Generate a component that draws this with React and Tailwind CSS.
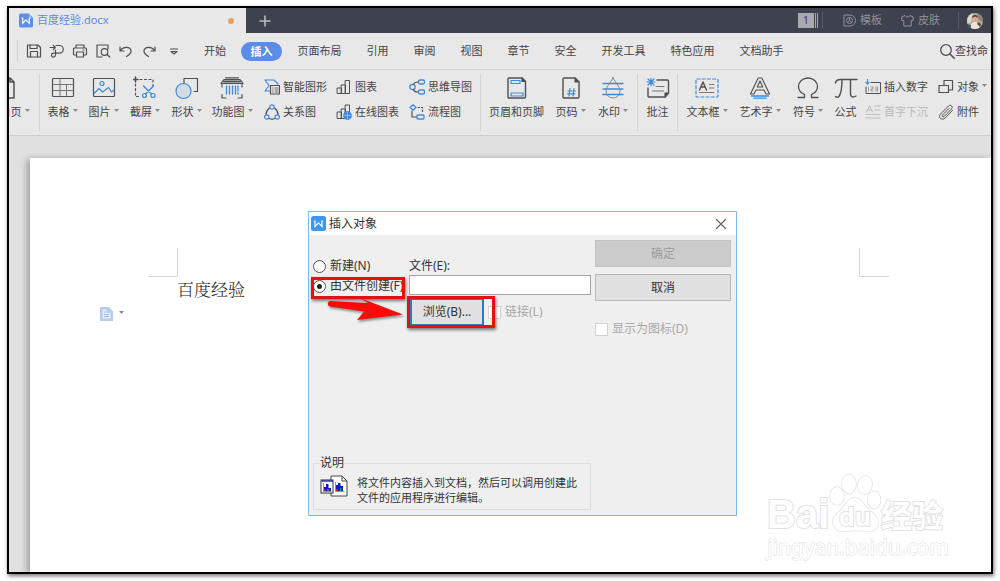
import React from "react";

const DARK = "#505050";
const BLUE = "#3f8ad8";

function Icon({ size = "h-[24px] w-[24px]", box = "0 0 24 24", children }) {
  return (
    <svg
      className={`${size} shrink-0`}
      viewBox={box}
      fill="none"
      stroke={DARK}
      strokeWidth="1.2"
      strokeLinecap="round"
      strokeLinejoin="round"
      aria-hidden="true"
    >
      {children}
    </svg>
  );
}

function Caret() {
  return (
    <svg className="mb-1 h-[3px] w-[5px] shrink-0" viewBox="0 0 5 3" aria-hidden="true">
      <path d="M0 0h5L2.500 3z" fill="#8a8a8a" />
    </svg>
  );
}

function WpsMark({ className, fill, folded }) {
  return (
    <svg className={`${className} shrink-0`} viewBox="0 0 15 15" aria-hidden="true">
      {folded ? (
        <>
          <path d="M2 0h8.500L15 4.500V13a2 2 0 0 1-2 2H2a2 2 0 0 1-2-2V2a2 2 0 0 1 2-2z" fill={fill} />
          <path d="M10.500 0 15 4.500h-4.500z" fill="#8db1f5" />
        </>
      ) : (
        <rect width="15" height="15" rx="2.5" fill={fill} />
      )}
      <path d="M2.800 5h1.200v5.500l3.500-3.700 3.500 3.700V5h1.200" fill="none" stroke="#fff" strokeWidth="1.2" />
    </svg>
  );
}

const quickIcons = [
  {
    name: "保存",
    art: (
      <>
        <path d="M1.500 2h10.500L14.500 4.500V14h-13z" />
        <path d="M4.500 14V8.500h7V14M4 2v3.500h7V2" />
      </>
    ),
  },
  {
    name: "输出",
    art: (
      <path d="M1 4.500h5M4.300 2.500l2 2-2 2M7 2.500h3.500a3.800 3.800 0 0 1 0 7.600H4a2 2 0 1 0 2.500 2V7" />
    ),
  },
  {
    name: "打印",
    art: (
      <>
        <path d="M4 5V2h8v3M4 12H2.500a1 1 0 0 1-1-1V6a1 1 0 0 1 1-1h11a1 1 0 0 1 1 1v5a1 1 0 0 1-1 1H12" />
        <path d="M4.500 9h7v5h-7zM11 7h1" />
      </>
    ),
  },
  {
    name: "打印预览",
    art: (
      <>
        <path d="M7 14H2V2h11v4" />
        <circle cx="9.500" cy="9" r="3.300" />
        <path d="m12 11.500 2.800 2.500" />
      </>
    ),
  },
  { name: "撤销", art: <path d="M2 4v4h4M2.300 7.700C5 3.500 12 3 13 7.500c.5 3-2 4.500-4.500 6" /> },
  { name: "恢复", art: <path d="M14 4v4h-4M13.700 7.700C11 3.500 4 3 3 7.500c-.5 3 2 4.500 4.500 6" /> },
];

const menusAfter = [
  ["页面布局", "w-[69px]"],
  ["引用", "w-[47px]"],
  ["审阅", "w-[47px]"],
  ["视图", "w-[47px]"],
  ["章节", "w-[47px]"],
  ["安全", "w-[47px]"],
  ["开发工具", "w-[69px]"],
  ["特色应用", "w-[69px]"],
  ["文档助手", "w-[69px]"],
];

function TitleBar() {
  return (
    <header className="flex h-[25px] items-stretch bg-[#3e414e]">
      <div className="flex w-[237px] shrink-0 items-center bg-[#e8e8e8] pl-2.5 pr-3">
        <WpsMark className="h-[15px] w-[14px]" fill="#5b8fee" folded />
        <span className="ml-1 text-[11px] text-[#5b8be6]">百度经验.docx</span>
        <span className="ml-auto h-[6px] w-[6px] rounded-full bg-[#eaa05a]" />
      </div>
      <button aria-label="新建标签" className="flex w-[38px] items-center justify-center">
        <svg className="h-3 w-3" viewBox="0 0 12 12" stroke="#b9bac0" strokeWidth="1.6" aria-hidden="true">
          <path d="M6 .5v11M.5 6h11" />
        </svg>
      </button>
      <div className="ml-auto flex items-center pr-2 text-[11px] text-[#91939c]">
        <button className="flex h-[15px] items-center">
          <span className="flex h-[15px] w-4 items-center justify-center bg-[#a9aab0] text-[11px] text-[#3e414e]">1</span>
          <span className="ml-px h-[15px] w-px bg-[#a9aab0]" />
          <span className="ml-px h-[15px] w-px bg-[#a9aab0]" />
        </button>
        <span className="ml-1 h-[17px] w-px bg-[#565966]" />
        <button className="ml-5 flex items-center gap-1">
          <svg className="h-[13px] w-[13px]" viewBox="0 0 13 13" fill="none" stroke="#91939c" aria-hidden="true">
            <path d="M1 1h6a5.500 5.500 0 0 1 0 11H1z" />
            <circle cx="6.500" cy="6.500" r="3" />
            <path d="M6.500 3.500v3l2.300 2M6.500 6.500l-2.300 2" />
          </svg>
          模板
        </button>
        <button className="ml-[19px] flex items-center gap-1">
          <svg className="h-[13px] w-[13px]" viewBox="0 0 13 13" fill="none" stroke="#91939c" aria-hidden="true">
            <path d="M4 1.500 .8 3v3.500h2V12h7.400V6.500h2V3L9 1.500C8 3.500 5 3.500 4 1.500z" />
          </svg>
          皮肤
        </button>
        <span className="ml-[18px] h-[17px] w-px bg-[#565966]" />
        <button aria-label="用户" className="ml-2">
          <svg className="h-4 w-4" viewBox="0 0 16 16" aria-hidden="true">
            <defs>
              <clipPath id="face">
                <circle cx="8" cy="8" r="8" />
              </clipPath>
            </defs>
            <g clipPath="url(#face)">
              <rect width="16" height="16" fill="#a9b0a8" />
              <path d="M0 0h6l-2 9-4 2z" fill="#d9d6cf" />
              <path d="M10 0h6v9l-4-2z" fill="#8c7f70" />
              <path d="M3 16c0-5 2-7 5-7s5 2 5 7z" fill="#ece3da" />
              <circle cx="8" cy="6" r="3" fill="#d9ab8e" />
              <path d="M5 5c0-4 6-4 6 0-2-2-4-2-6 0z" fill="#4a332b" />
              <path d="M0 11l4 1v4H0z" fill="#4f5a4c" />
              <path d="m11 9 3 2-1 3-3-3z" fill="#6d4a3c" />
            </g>
          </svg>
        </button>
      </div>
    </header>
  );
}

function MenuBar() {
  return (
    <nav className="flex h-[37px] items-center overflow-hidden border-b border-[#d6d6d6] text-[11px]">
      <span className="ml-2 h-[22px] w-px shrink-0 bg-[#cfcfcf]" />
      <div className="ml-2 flex shrink-0 items-center gap-[7px]">
        {quickIcons.map((q) => (
          <button key={q.name} aria-label={q.name}>
            <Icon size="h-4 w-4" box="0 0 16 16">{q.art}</Icon>
          </button>
        ))}
        <button aria-label="更多" className="ml-0.5">
          <Icon size="h-4 w-4" box="0 0 16 16">
            <path d="M4.500 6h7M5 8.500l3 2.500 3-2.500z" />
          </Icon>
        </button>
      </div>
      <button className="ml-2.5 w-[46px] shrink-0">开始</button>
      <button className="mx-[3px] h-[19px] w-[41px] shrink-0 rounded-full bg-[#5b8de8] font-bold leading-none text-white">插入</button>
      {menusAfter.map(([name, width]) => (
        <button key={name} className={`${width} shrink-0 whitespace-nowrap`}>{name}</button>
      ))}
      <button className="ml-auto flex shrink-0 items-center whitespace-nowrap pr-[3px]">
        <Icon size="h-4 w-4" box="0 0 16 16">
          <circle cx="7" cy="7" r="5.300" strokeWidth="1.300" />
          <path d="m11 11 4.200 4.200" strokeWidth="1.600" />
        </Icon>
        查找命
      </button>
    </nav>
  );
}

function BigTool({ width, label, caret, children }) {
  return (
    <button className={`${width} flex shrink-0 flex-col items-center`}>
      <Icon>{children}</Icon>
      <span className="mt-1 flex items-end gap-[3px] whitespace-nowrap leading-4">
        {label}
        {caret && (
          <span className="mb-1">
            <Caret />
          </span>
        )}
      </span>
    </button>
  );
}

function SmallTool({ label, muted, caret, children }) {
  return (
    <button className={`flex items-center gap-[3px] whitespace-nowrap leading-4 ${muted ? "text-[#b9b9b9]" : ""}`}>
      <Icon size="h-4 w-4" box="0 0 16 16">{children}</Icon>
      {label}
      {caret && <Caret />}
    </button>
  );
}

function Divider() {
  return <span className="my-1 w-px shrink-0 bg-[#d4d4d4]" />;
}

function Ribbon() {
  return (
    <section aria-label="插入" className="flex h-[66px] shrink-0 overflow-hidden border-b border-[#cecece] text-[11px]">
      <div className="flex w-[30px] shrink-0 justify-end overflow-hidden pr-[3px] pt-[6px]">
        <BigTool width="w-[54px]" label="空白页" caret>
          <path d="M4 2h9l4 4v16H4zM13 2v4h4" strokeWidth="1.500" />
        </BigTool>
      </div>
      <Divider />
      <div className="flex shrink-0 pl-[2px] pt-[6px]">
        <BigTool width="w-[41px]" label="表格" caret>
          <rect x="1.500" y="2.500" width="21" height="18" rx="1" />
          <path d="M2 8.500h20M2 14.500h20M9 3v17M15.500 9v11" stroke="#777" strokeWidth="1" />
        </BigTool>
        <BigTool width="w-[41px]" label="图片" caret>
          <rect x="1.500" y="2.500" width="21" height="18" rx="1" />
          <g stroke={BLUE}>
            <circle cx="10" cy="7.500" r="2" />
            <path d="M2.500 17 7 12.500l3.500 3.500 6-4.500 3 4.500 2.500-2" />
          </g>
        </BigTool>
        <BigTool width="w-[42px]" label="截屏" caret>
          <path d="M0 3.500h5M2.500 1v5" strokeWidth="1.500" />
          <path d="M7 3.500h13v6M2.500 8v12.500h5" strokeDasharray="2 2.500" />
          <g stroke={BLUE}>
            <path d="m10.500 10 8 8M20.500 10l-8 8" strokeWidth="1.400" />
            <circle cx="11.500" cy="19.500" r="2" />
            <circle cx="20" cy="19.500" r="2" />
          </g>
        </BigTool>
        <BigTool width="w-[41px]" label="形状" caret>
          <path d="M9 7V2.500h13.500v13H19" />
          <circle cx="8.500" cy="15" r="7.500" stroke={BLUE} fill="#d2dce6" />
        </BigTool>
        <BigTool width="w-[50px]" label="功能图" caret>
          <path d="M4 3.500h16l3 4H1zM5.500 1.800h13M2 11V7.500h20V11M2 18.500V22h4M22 18.500V22h-4" />
          <path d="M4 5.500h16" strokeWidth="2" />
          <path d="M6.500 10v8M9.500 10v8M12.500 10v8M15.500 10v8M18 10v5M18 17v1" stroke={BLUE} strokeWidth="1.300" />
        </BigTool>
      </div>
      <div className="grid shrink-0 auto-rows-min grid-cols-[72px_73px_71px] gap-y-[9px] pl-[7px] pt-[9px]">
        <SmallTool label="智能图形">
          <path d="M1 1h9l4 4M1 1l4 5.500L1 12h5" stroke={BLUE} />
          <rect x="6.500" y="6.500" width="9" height="8.500" />
          <path d="M8.500 9h.5M11 9h3M8.500 11h.5M11 11h3M8.500 13h.5M11 13h3" strokeWidth=".8" />
        </SmallTool>
        <SmallTool label="图表">
          <path d="M1.500 9h4v5.500h-4zM5.500 6h4v8.500h-4zM9.500 1.500h4v13h-4z" strokeWidth="1" />
        </SmallTool>
        <SmallTool label="思维导图">
          <g stroke={BLUE} strokeWidth="1.300">
            <circle cx="3.500" cy="8" r="2.700" />
            <rect x="9.500" y="1" width="6" height="4" rx="1.500" />
            <rect x="9.500" y="11" width="6" height="4" rx="1.500" />
          </g>
          <path d="M4.500 5.500C5 3.500 6.500 3 9 3M4.500 10.500C5 12.500 6.500 13 9 13" />
        </SmallTool>
        <SmallTool label="关系图">
          <path d="M5.500 4C3 6 2 8 2 10.500M10.500 4C13 6 14 8 14 10.500M5 14.500c2 .8 4 .8 6 0" />
          <g stroke={BLUE}>
            <circle cx="8" cy="3" r="2.200" />
            <circle cx="2.800" cy="13" r="2.200" />
            <circle cx="13.200" cy="13" r="2.200" />
          </g>
        </SmallTool>
        <SmallTool label="在线图表">
          <path d="M1.500 8h4v6.500h-4zM5.500 5h4v9.500h-4zM9.500 1h4v8h-4z" strokeWidth="1" />
          <circle cx="11.500" cy="11.500" r="3.800" fill={BLUE} stroke={BLUE} />
          <path d="M8 11.500h7M11.500 8v7" stroke="#a9cbed" strokeWidth=".7" />
        </SmallTool>
        <SmallTool label="流程图">
          <g stroke={BLUE} strokeWidth="1.300">
            <path d="m4 .8 3 2.700-3 2.700-3-2.700z" />
            <rect x="8" y="11" width="7" height="4" rx="1" />
          </g>
          <path d="M3 7v6h4.500" />
          <path d="M9 3.500h4.500V9" strokeDasharray="1.500 2" />
        </SmallTool>
      </div>
      <Divider />
      <div className="flex shrink-0 px-[3px] pt-[6px]">
        <BigTool width="w-[65px]" label="页眉和页脚">
          <path d="M4 2h13l3.500 3.500V21a1 1 0 0 1-1 1H4a1 1 0 0 1-1-1V3a1 1 0 0 1 1-1z" strokeWidth="1.400" />
          <path d="M17 2v3.500h3.500z" fill={DARK} />
          <path d="M6 4.500h9v3H6zM6 17h12v3H6z" stroke={BLUE} />
        </BigTool>
        <BigTool width="w-[43px]" label="页码" caret>
          <path d="M5 2h11l4 4v15a1 1 0 0 1-1 1H5a1 1 0 0 1-1-1V3a1 1 0 0 1 1-1z" strokeWidth="1.400" />
          <path d="M16 2v4h4z" fill={DARK} />
          <path d="M11 12.500 10 20M15 12.500 14 20M9 15h7.500M8.500 17.800h7.500" stroke={BLUE} />
        </BigTool>
        <BigTool width="w-[42px]" label="水印" caret>
          <path d="M12 1.500c2 5 7 9 7 13.500a7 7 0 0 1-14 0c0-4.500 5-8.500 7-13.500z" stroke="#888" strokeWidth="1" />
          <path d="M2 7.500h20M2 13h20M2 18.500h20" stroke={BLUE} strokeWidth="1.300" />
        </BigTool>
      </div>
      <Divider />
      <div className="flex shrink-0 pt-[6px]">
        <BigTool width="w-[39px]" label="批注">
          <path d="M11 4h10.500a1 1 0 0 1 1 1v12L19 21H3a1 1 0 0 1-1-1v-8" strokeWidth="1.400" />
          <path d="M22.500 17H19v4z" fill={DARK} />
          <path d="M10 10.500h8M6.500 15h11" stroke="#777" strokeWidth="1" />
          <path d="M5 2v8M1 6h8M2 3l6 6M8 3 2 9" stroke={BLUE} />
        </BigTool>
      </div>
      <Divider />
      <div className="flex shrink-0 pl-[3px] pt-[6px]">
        <BigTool width="w-[52px]" label="文本框" caret>
          <rect x="1" y="3" width="22" height="18" rx="1" stroke={BLUE} strokeDasharray="3 2.200" />
          <path d="m4.500 14 3.500-8 3.500 8M6 11h4" strokeWidth="1.400" />
          <path d="M14.500 8.500H19M14.500 12H19M4.500 16.500H19" stroke="#777" strokeWidth="1" />
        </BigTool>
        <BigTool width="w-[54px]" label="艺术字" caret>
          <path d="M10.200 2h3.600L21.500 18H18l-2-4H8l-2 4H2.500zM9.300 11h5.400L12 5z" strokeWidth="1.100" />
          <path d="M3.500 20h17M6 22.200h12" stroke={BLUE} strokeWidth="1.300" />
        </BigTool>
        <BigTool width="w-[42px]" label="符号" caret>
          <path d="M2 21.500h6.500v-3C4 16.500 2.500 14 2.500 10.500a9.500 8.500 0 0 1 19 0c0 3.500-1.500 6-6 8v3H22" strokeWidth="1.300" />
        </BigTool>
        <BigTool width="w-[33px]" label="公式">
          <path d="M1.500 7c.5-3 2-3.500 5-3.500H23M8 3.500c0 8-1 14-3 17-1 1-2.500 1-3.500 0M16.500 3.500v14c0 4 3 4 5.500 2.500" strokeWidth="1.400" />
        </BigTool>
      </div>
      <div className="grid shrink-0 auto-rows-min grid-cols-[73px_56px] gap-y-[9px] pl-[3px] pt-[9px]">
        <SmallTool label="插入数字">
          <path d="M6 3.500h9.500v11H1V8" strokeWidth="1" />
          <path d="M2.500 0v5M1 3.500 2.500 5 4 3.500" stroke={BLUE} />
          <path d="M3.500 8v4M6 8h2v2H6v2h2M10.500 8h2v4h-2M10.500 10h2" strokeWidth=".8" stroke="#888" />
        </SmallTool>
        <SmallTool label="对象" caret>
          <path d="M6 6V1.500h8.500v9.500h-3.500" />
          <path d="M1 6.500h9.500v7H1z" />
        </SmallTool>
        <SmallTool label="首字下沉" muted>
          <path d="m1.500 8 3-6.500 3 6.500M2.500 6h4M9.500 2H15M9.500 6H15M1 10.500h14M1 14h14" stroke="#bdbdbd" strokeWidth="1" />
        </SmallTool>
        <SmallTool label="附件">
          <path d="m11 4.500-6.500 6.500c-1 1.300.5 2.500 1.500 1.500L13.500 5c2-2.500-1-5-3-3L2.500 10c-3 3.500 1.500 7 4.500 4l7.500-7.500" strokeWidth="1" />
        </SmallTool>
      </div>
    </section>
  );
}

function ObjectDialog() {
  return (
    <div
      role="dialog"
      aria-labelledby="dialog-title"
      className="absolute left-[278px] top-[53px] w-[429px] border border-[#7fbbe9] bg-[#efefef] text-[12px] leading-4 text-[#333]"
    >
      <div className="flex h-[23px] items-center bg-white pl-[2px] pr-2">
        <WpsMark className="h-[15px] w-[15px]" fill="#3b97f5" />
        <h1 id="dialog-title" className="ml-[3px] text-[12px]">插入对象</h1>
        <button aria-label="关闭" className="ml-auto">
          <svg className="h-[14px] w-[14px]" viewBox="0 0 14 14" stroke="#666" strokeWidth="1.200" aria-hidden="true">
            <path d="m2 2 10 10M12 2 2 12" />
          </svg>
        </button>
      </div>
      <form className="relative flex flex-col pb-[5px] pl-1 pr-[5px]" onSubmit={(e) => e.preventDefault()}>
        <div className="flex h-[220px] pt-[5px]">
          <div className="flex w-[96px] shrink-0 flex-col gap-1 pt-[18px]">
            <label className="flex items-center gap-1 whitespace-nowrap">
              <input
                type="radio"
                name="source"
                className="h-[13px] w-[13px] shrink-0 appearance-none rounded-full border border-[#555] bg-white checked:border-[4px] checked:border-white checked:bg-[#222] checked:outline checked:outline-1 checked:-outline-offset-1 checked:outline-[#555]"
              />
              新建(N)
            </label>
            <label className="flex items-center gap-1 whitespace-nowrap">
              <input
                type="radio"
                name="source"
                defaultChecked
                className="h-[13px] w-[13px] shrink-0 appearance-none rounded-full border border-[#555] bg-white checked:border-[4px] checked:border-white checked:bg-[#222] checked:outline checked:outline-1 checked:-outline-offset-1 checked:outline-[#555]"
              />
              由文件创建(F)
            </label>
          </div>
          <div className="flex w-[182px] shrink-0 flex-col pt-[18px]">
            <label htmlFor="file-name">文件(E):</label>
            <input id="file-name" type="text" className="mt-[1px] h-5 w-full border border-[#a5a5a5] bg-white px-1" />
            <div className="mt-[3px] flex items-center">
              <button type="button" className="ml-px h-[28px] w-[74px] shrink-0 border-2 border-[#2878c4] bg-[#e1e1e1]">浏览(B)...</button>
              <label className="ml-[4px] flex items-center gap-1 whitespace-nowrap text-[#a8a8a8]">
                <input type="checkbox" disabled className="h-[13px] w-[13px] appearance-none border border-[#d2d2d2] bg-white" />
                链接(L)
              </label>
            </div>
          </div>
          <div className="ml-1 flex flex-1 flex-col">
            <button type="button" disabled className="h-[27px] border border-[#c2c2c2] bg-[#cccccc] text-[#9d9d9d]">确定</button>
            <button type="button" className="mt-[7px] h-[27px] border border-[#b8b8b8] bg-[#e1e1e1]">取消</button>
            <label className="mt-5 flex items-center gap-1 whitespace-nowrap text-[#a8a8a8]">
              <input type="checkbox" disabled className="h-[13px] w-[13px] appearance-none border border-[#d2d2d2] bg-white" />
              显示为图标(D)
            </label>
          </div>
        </div>
        <fieldset className="w-[278px] border border-[#dfdfdf] pb-1 pl-1.5">
          <legend className="px-0 leading-4">说明</legend>
          <div className="flex items-start gap-[9px] pt-1">
            <svg className="h-[22px] w-[28px] shrink-0" viewBox="0 0 28 22" aria-hidden="true">
              <path d="M11 1h11l5 5v15H11z" fill="#fff" stroke="#444" />
              <path d="M22 1v5h5" fill="none" stroke="#444" />
              <rect x="1" y="5" width="12" height="13" fill="#fff" stroke="#333" />
              <path d="M1.500 6h11.500" stroke="#223a8a" strokeWidth="1.500" />
              <path d="M3.500 8v8.500h8M15.500 7v9.500h9" fill="none" stroke="#777" strokeWidth=".8" />
              <path d="M4 16v-4h2V9h2.500v4H11v3zM16 16v-6h2V8h2.500v3H23v5z" fill="#1414d2" />
              <path d="M7 16v-2h2v2zM20 16v-3h1.500v3z" fill="#1e9a3c" />
              <path d="M4 16v-1.500h2V16zM16 16v-2h2v2z" fill="#d02020" />
            </svg>
            <p className="text-[11px] leading-[15px]">
              将文件内容插入到文档，然后可以调用创建此
              <br />
              文件的应用程序进行编辑。
            </p>
          </div>
        </fieldset>
        <div className="pointer-events-none absolute left-[2px] top-[42px] h-[22px] w-[94px] border-[3px] border-[#e21212] shadow-[1px_2px_3px_rgba(0,0,0,0.5)]" />
        <div className="pointer-events-none absolute left-[98px] top-[61px] h-[32px] w-[88px] border-[3px] border-[#e21212] shadow-[1px_2px_3px_rgba(0,0,0,0.5)]" />
        <svg
          className="pointer-events-none absolute left-[17px] top-[61px] h-[30px] w-[80px] drop-shadow-[1px_2px_1px_rgba(0,0,0,0.4)]"
          viewBox="0 0 80 30"
          aria-hidden="true"
        >
          <path d="M4 5 42 7 34 2 77 18.500 31 24l7-8.500L4 10.500a2.800 2.800 0 0 1 0-5.500z" fill="#fa0a0a" />
        </svg>
      </form>
    </div>
  );
}

function Watermark() {
  return (
    <div className="absolute bottom-[11px] right-[42px] w-[182px] font-[Noto_Sans,Noto_Sans_CJK_SC,sans-serif] text-white [-webkit-text-stroke:2px_#e2e2e2] [paint-order:stroke_fill]">
      <div className="flex h-[62px] items-end">
        <span className="w-[62px] font-[Liberation_Sans,sans-serif] text-[40px] font-bold leading-[38px]">Bai</span>
        <span className="relative flex h-[60px] w-[52px] items-end justify-center">
          <svg className="absolute inset-0 h-[60px] w-[52px]" viewBox="0 0 52 60" fill="#fff" stroke="#e2e2e2" strokeWidth="1.500" aria-hidden="true">
            <ellipse cx="8" cy="23" rx="7" ry="9" />
            <ellipse cx="20" cy="11" rx="7" ry="9.500" />
            <ellipse cx="36" cy="12" rx="7" ry="9" transform="rotate(10 36 12)" />
            <ellipse cx="45" cy="27" rx="6.500" ry="8.500" />
            <path d="M26 25c7 0 8 7 14 12 6 4 9 8 9 13 0 7-6 9-11 8.500-8-1.500-15-1.500-23 0C9 59 4 55 4 49c0-6 4-8 8-12 5-5 6-12 14-12z" />
          </svg>
          <span className="relative text-[25px] font-bold leading-[34px]">du</span>
        </span>
        <span className="text-[31px] font-bold leading-[36px]">经验</span>
      </div>
      <div className="text-[21px] leading-7 [-webkit-text-stroke:1px_#dedede]">jingyan.baidu.com</div>
    </div>
  );
}

function DocumentArea() {
  return (
    <main className="flex flex-1 bg-[#e1e1e1] pl-[21px] pt-[22px]">
      <div className="relative flex-1 bg-white pt-[90px] shadow-[-3px_1px_7px_rgba(0,0,0,0.3)]">
        <div className="flex justify-between pl-[118px] pr-[102px]">
          <span className="h-[29px] w-[30px] border-b border-r border-[#d8d8d8]" />
          <span className="h-[29px] w-[30px] border-b border-l border-[#d8d8d8]" />
        </div>
        <p className="pl-[147px] font-[Noto_Serif_CJK_SC,Noto_Sans_CJK_SC,serif] text-[17px] font-light leading-6 text-[#222]">百度经验</p>
        <button aria-label="粘贴选项" className="ml-[70px] mt-1.5 flex items-center gap-1.5">
          <svg className="h-[14px] w-[13px]" viewBox="0 0 13 14" aria-hidden="true">
            <path d="M0 0h9l4 4v10H0z" fill="#b9cdea" />
            <path d="M2.500 2.500h4v3.500h4v5.500h-8z" fill="#e4edf9" />
            <path d="M4 5h2M4 7.500h5M4 9.500h5" stroke="#9db8e0" />
          </svg>
          <Caret />
        </button>
        <ObjectDialog />
        <Watermark />
      </div>
    </main>
  );
}

export default function App() {
  return (
    <div className="flex min-h-screen flex-col bg-white px-[7px] pb-[7px] pt-[6px] font-[Noto_Sans,Noto_Sans_CJK_SC,sans-serif] text-[#444]">
      <div className="flex flex-1 flex-col overflow-hidden border-2 border-black bg-[#e8e8e8] shadow-[1px_2px_4px_rgba(0,0,0,0.55)]">
        <TitleBar />
        <MenuBar />
        <Ribbon />
        <DocumentArea />
      </div>
    </div>
  );
}
